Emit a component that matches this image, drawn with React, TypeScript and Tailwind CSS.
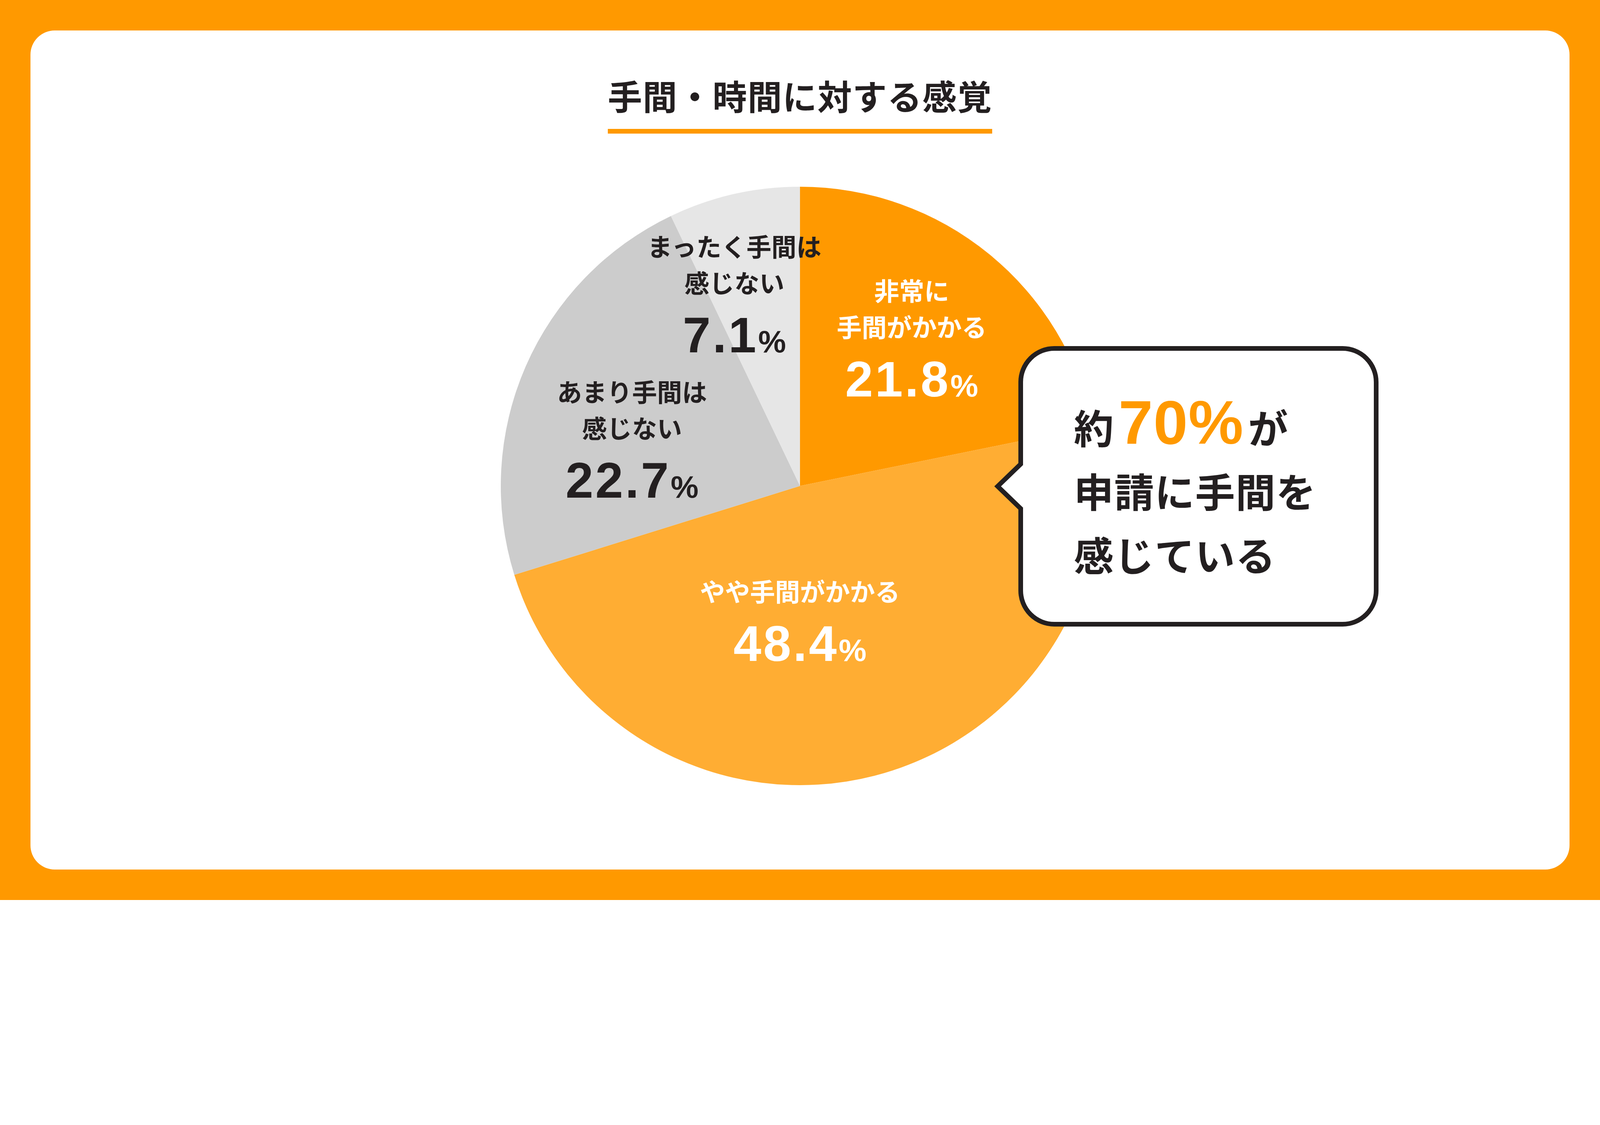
import React from 'react';

interface Slice {
  value: number;
  color: string;
}

interface PieLabel {
  lines: string[];
  value: string;
  x: number;
  y: number;
  dark: boolean;
}

// radius of the pie in css px
const R = 766;

const slices: Slice[] = [
  { value: 21.8, color: '#FF9900' },
  { value: 48.4, color: '#FFAD33' },
  { value: 22.7, color: '#CCCCCC' },
  { value: 7.1, color: '#E6E6E6' },
];

const labels: PieLabel[] = [
  { lines: ['非常に', '手間がかかる'], value: '21.8', x: 1052, y: 267, dark: false },
  { lines: ['やや手間がかかる'], value: '48.4', x: 766, y: 1037, dark: false },
  { lines: ['あまり手間は', '感じない'], value: '22.7', x: 336, y: 526, dark: true },
  { lines: ['まったく手間は', '感じない'], value: '7.1', x: 598, y: 154, dark: true },
];

function point(frac: number) {
  const a = frac * Math.PI * 2 - Math.PI / 2;
  return [R + R * Math.cos(a), R + R * Math.sin(a)];
}

function slicePath(start: number, end: number) {
  const [x1, y1] = point(start);
  const [x2, y2] = point(end);
  const large = end - start > 0.5 ? 1 : 0;
  return `M ${R} ${R} L ${x1} ${y1} A ${R} ${R} 0 ${large} 1 ${x2} ${y2} Z`;
}

function Label({ label }: { label: PieLabel }) {
  const color = label.dark ? 'text-[#231F20]' : 'text-white';
  return (
    <div
      className={`absolute flex -translate-x-1/2 flex-col items-center whitespace-nowrap ${color}`}
      style={{ left: label.x, top: label.y - 50 }}
    >
      {label.lines.map((line) => (
        <div key={line} className="h-[93px] font-['Noto_Sans_CJK_JP',sans-serif] text-[64px] font-bold leading-[93px]">
          {line}
        </div>
      ))}
      <div className="mt-[26px] h-[128px] font-['Liberation_Sans',sans-serif] text-[128px] font-bold leading-[128px] tracking-[5px]">
        {label.value}
        <span className="text-[80px] tracking-normal">%</span>
      </div>
    </div>
  );
}

export default function App() {
  let acc = 0;
  const paths = slices.map((s) => {
    const start = acc / 100;
    acc += s.value;
    return { d: slicePath(start, acc / 100), color: s.color };
  });

  return (
    <div className="h-[2304px] w-[4096px] bg-[#FF9900] p-[78px]">
      <div className="flex h-full w-full flex-col items-center rounded-[62px] bg-white">
        {/* title */}
        <div className="mt-[112px] border-b-[12px] border-[#FF9900] pb-[34px]">
          <h1 className="h-[106px] font-['Noto_Sans_CJK_JP',sans-serif] text-[88px] font-bold leading-[106px] tracking-[1.5px] text-[#231F20]">
            手間・時間に対する感覚
          </h1>
        </div>

        {/* chart */}
        <div className="relative mt-[136px] h-[1532px] w-[1532px]">
          <svg width={R * 2} height={R * 2} viewBox={`0 0 ${R * 2} ${R * 2}`}>
            {paths.map((p) => (
              <path key={p.color} d={p.d} fill={p.color} />
            ))}
          </svg>

          {labels.map((l) => (
            <Label key={l.value} label={l} />
          ))}

          {/* callout */}
          <div className="absolute left-[1325px] top-[408px] h-[718px] w-[922px] rounded-[92px] border-[12px] border-[#231F20] bg-white pl-[130px] pt-[112px] text-[#231F20]">
            <svg className="absolute -left-[12px] -top-[12px] overflow-visible" width={1} height={1}>
              <polygon points="6,302 -53,359 6,416 18,416 18,302" fill="#ffffff" />
              <polyline
                points="6,288 6,302 -53,359 6,416 6,430"
                fill="none"
                stroke="#231F20"
                strokeWidth={12}
                strokeLinejoin="miter"
              />
            </svg>
            <div className="relative whitespace-nowrap font-['Noto_Sans_CJK_JP',sans-serif] text-[102px] font-bold leading-[163px] tracking-[1.5px]">
              <div className="h-[163px]">
                約
                <span className="mx-[11px] font-['Liberation_Sans',sans-serif] text-[158px] leading-[0px] tracking-[1.5px] text-[#FF9900]">
                  70%
                </span>
                が
              </div>
              <div className="h-[163px]">申請に手間を</div>
              <div className="h-[163px]">感じている</div>
            </div>
          </div>
        </div>
      </div>
    </div>
  );
}
